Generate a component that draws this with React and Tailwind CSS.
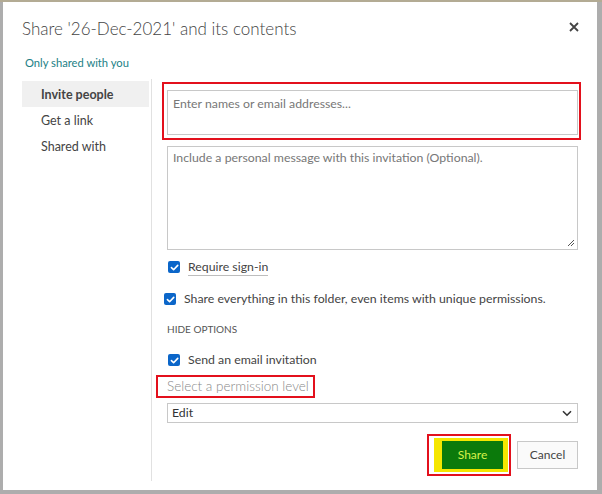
const font = { fontFamily: '"Segoe UI", Lato, "Open Sans", sans-serif' };

function Check({ className = '' }) {
  return (
    <span className={`flex h-[12px] w-[12px] shrink-0 items-center justify-center rounded-[2px] bg-[#0b66c9] ${className}`}>
      <svg width="9" height="9" viewBox="0 0 10 10" fill="none">
        <path d="M1.6 5.2 L4 7.5 L8.6 2.6" stroke="white" strokeWidth="1.8" strokeLinecap="round" strokeLinejoin="round" />
      </svg>
    </span>
  );
}

function NavItem({ label, active }) {
  return (
    <div className={`flex h-[26px] items-center pl-[19px] pt-[3px] text-[12.5px] text-[#444] ${active ? 'bg-[#f0f0f0] font-bold' : ''}`}>
      {label}
    </div>
  );
}

export default function App() {
  return (
    <div className="h-[494px] w-[602px] overflow-hidden border-t-2 border-[#b3ab94] bg-[#adadad] pb-[4px] pl-[3px] pr-[5px]" style={font}>
      <div className="flex h-full flex-col bg-white">
        <div className="flex items-start justify-between pl-[19px] pr-[16px] pt-[15px]">
          <h1 className="text-[17px] font-light leading-[24px] text-[#444]">Share '26-Dec-2021' and its contents</h1>
          <button className="mt-[3px] p-[2px]">
            <svg width="10" height="10" viewBox="0 0 10 10">
              <path d="M1 1 L9 9 M9 1 L1 9" stroke="#444" strokeWidth="1.8" />
            </svg>
          </button>
        </div>
        <p className="mt-[14px] pl-[22px] text-[11.2px] leading-[16px] text-[#1c7f86]">Only shared with you</p>

        <div className="mt-[8px] flex h-[402px] pl-[19px]">
          <nav className="w-[130px] border-r border-[#e1e1e1] pr-[2px] pt-[2px]">
            <NavItem label="Invite people" active />
            <NavItem label="Get a link" />
            <NavItem label="Shared with" />
          </nav>

          <div className="flex flex-col pl-[10px]">
            <div className="mt-[3px] h-[58px] w-[419px] border-2 border-[#e3101c] pl-[3px] pt-[6px]">
              <div className="h-[45px] w-[411px] border border-[#c8c8c8] px-[5px] pt-[5px] text-[12.3px] leading-[16px] text-[#777]">
                Enter names or email addresses...
              </div>
            </div>

            <div className="relative ml-[5px] mt-[6px] h-[104px] w-[411px] border border-[#c8c8c8] px-[5px] pt-[3px] text-[12.3px] leading-[16px] text-[#777]">
              Include a personal message with this invitation (Optional).
              <svg className="absolute bottom-[2px] right-[2px]" width="8" height="8" viewBox="0 0 8 8">
                <path d="M7 1 L1 7 M7 4 L4 7" stroke="#555" strokeWidth="1" />
              </svg>
            </div>

            <div className="ml-[6px] mt-[9px] flex h-[17px] items-start">
              <Check className="mt-[2px]" />
              <span className="ml-[8px] border-b border-[#bdbdbd] text-[12.3px] leading-[16px] text-[#444]">Require sign-in</span>
            </div>

            <div className="ml-[2px] mt-[15px] flex h-[16px] items-center">
              <Check />
              <span className="ml-[8px] text-[12.3px] leading-[16px] text-[#444]">Share everything in this folder, even items with unique permissions.</span>
            </div>

            <div className="ml-[5px] mt-[15px] flex h-[14px] items-center text-[10px] uppercase text-[#555]">Hide options</div>

            <div className="ml-[6px] mt-[16px] flex h-[16px] items-center">
              <Check />
              <span className="ml-[8px] text-[12.3px] leading-[16px] text-[#444]">Send an email invitation</span>
            </div>

            <div className="-ml-[6px] mt-[7px] flex h-[23px] w-[159px] items-center whitespace-nowrap border-2 border-[#e3101c] pl-[9px] text-[13.5px] font-light text-[#888]">
              Select a permission level
            </div>

            <div className="ml-[5px] mt-[5px] flex h-[20px] w-[411px] items-center justify-between border border-[#c8c8c8] pl-[4px] pr-[5px] text-[12.3px] text-[#333]">
              <span>Edit</span>
              <svg width="10" height="7" viewBox="0 0 10 7" fill="none">
                <path d="M1 1.2 L5 5.2 L9 1.2" stroke="#333" strokeWidth="1.6" />
              </svg>
            </div>

            <div className="mr-[3px] mt-[11px] flex items-center justify-end gap-[6px]">
              <div className="h-[42px] w-[84px] border-2 border-[#e3101c] py-[2px] pl-[5px] pr-[1px]">
                <div className="h-full bg-[#f5e600] py-[3px] pl-[8px] pr-[5px]">
                  <button className="flex h-full w-full items-center justify-center bg-[#0b7a0b] text-[12px] text-[#d6f24a]">Share</button>
                </div>
              </div>
              <button className="flex h-[28px] w-[61px] items-center justify-center border border-[#c8c8c8] bg-[#fafafa] text-[12px] text-[#444]">Cancel</button>
            </div>
          </div>
        </div>
      </div>
    </div>
  );
}
